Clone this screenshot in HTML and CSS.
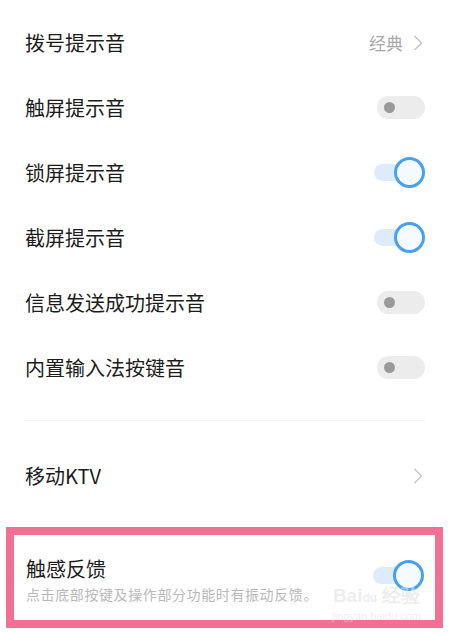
FILE: index.html
```html
<!DOCTYPE html>
<html lang="zh">
<head>
<meta charset="utf-8">
<link rel="stylesheet" href="styles.css">
</head>
<body>
<div class="page">
  <div class="list">
    <div class="row">
      <span class="title">拨号提示音</span>
      <span class="value">经典<svg class="chev" width="10" height="16" viewBox="0 0 10 16"><polyline points="1.5,1 8.5,8 1.5,15" fill="none" stroke="#c4c4c4" stroke-width="1.4"/></svg></span>
    </div>
    <div class="row">
      <span class="title">触屏提示音</span>
      <span class="switch off"><span class="dot"></span></span>
    </div>
    <div class="row">
      <span class="title">锁屏提示音</span>
      <span class="switch on"><span class="track"></span><span class="knob"></span></span>
    </div>
    <div class="row">
      <span class="title">截屏提示音</span>
      <span class="switch on"><span class="track"></span><span class="knob"></span></span>
    </div>
    <div class="row">
      <span class="title">信息发送成功提示音</span>
      <span class="switch off"><span class="dot"></span></span>
    </div>
    <div class="row">
      <span class="title">内置输入法按键音</span>
      <span class="switch off"><span class="dot"></span></span>
    </div>
  </div>
  <div class="divider"></div>
  <div class="row ktv">
    <span class="title">移动KTV</span>
    <svg class="chev" width="10" height="16" viewBox="0 0 10 16"><polyline points="1.5,1 8.5,8 1.5,15" fill="none" stroke="#c4c4c4" stroke-width="1.4"/></svg>
  </div>
  <div class="highlight">
    <div class="hrow">
      <div class="texts">
        <div class="title">触感反馈</div>
        <div class="sub">点击底部按键及操作部分功能时有振动反馈。</div>
      </div>
      <span class="switch on"><span class="track"></span><span class="knob"></span></span>
    </div>
    <div class="watermark">
      <span class="wm-logo">Bai<span class="paw">du</span> 经验</span>
      <span class="wm-url">jingyan.baidu.com</span>
    </div>
  </div>
</div>
</body>
</html>
```

FILE: styles.css
```css
* { box-sizing: border-box; }
html, body {
  margin: 0;
  padding: 0;
  background: #ffffff;
}
body {
  width: 450px;
  height: 634px;
  overflow: hidden;
  font-family: "Noto Sans CJK SC", "Noto Sans", sans-serif;
  color: #1c1c1c;
}
.page {
  padding-top: 10px;
}
.list {
  display: flex;
  flex-direction: column;
}
.row {
  height: 65px;
  padding: 0 25px 0 25px;
  display: flex;
  align-items: center;
  justify-content: space-between;
}
.title {
  font-size: 20px;
  line-height: 24px;
  color: #1c1c1c;
}
.value {
  display: flex;
  align-items: center;
  gap: 10px;
  font-size: 17px;
  color: #a9a9a9;
  margin-right: 2px;
}
.chev {
  display: block;
}
.ktv .chev {
  margin-right: 2px;
}
.switch {
  position: relative;
  display: block;
}
.switch.off {
  width: 48px;
  height: 23px;
  border-radius: 12px;
  background: #ececec;
}
.switch.off .dot {
  position: absolute;
  left: 7px;
  top: 6px;
  width: 11px;
  height: 11px;
  border-radius: 50%;
  background: #9a9a9a;
}
.switch.on {
  width: 51px;
  height: 31px;
}
.switch.on .track {
  position: absolute;
  left: 0;
  top: 7px;
  width: 40px;
  height: 17px;
  border-radius: 9px;
  background: #ddecfb;
}
.switch.on .knob {
  position: absolute;
  right: 0;
  top: 0;
  width: 31px;
  height: 31px;
  border-radius: 50%;
  border: 3.5px solid #46a0f4;
  background: #f5faff;
}
.divider {
  margin: 20px 25px 0 24px;
  height: 1px;
  background: #f3f3f3;
}
.ktv {
  margin-top: 22px;
}
.highlight {
  position: relative;
  margin: 19px 7px 0 6px;
  border: 8px solid #f46f95;
}
.hrow {
  padding: 22px 11px 16px 12px;
  display: flex;
  align-items: flex-start;
  justify-content: space-between;
}
.texts {
  display: flex;
  flex-direction: column;
  gap: 3px;
}
.sub {
  font-size: 14px;
  line-height: 20px;
  letter-spacing: 0.6px;
  color: #b9b9b9;
}
.hrow .switch.on {
  margin-top: 3px;
}
.watermark {
  position: absolute;
  right: 14px;
  top: 49px;
  display: flex;
  flex-direction: column;
  align-items: center;
  color: rgba(225, 225, 225, 0.6);
  pointer-events: none;
}
.wm-logo {
  font-family: "Liberation Sans", sans-serif;
  font-size: 19px;
  line-height: 24px;
  font-weight: bold;
}
.paw {
  font-size: 12px;
}
.wm-url {
  font-family: "Liberation Sans", sans-serif;
  font-size: 11px;
  line-height: 13px;
}
```
